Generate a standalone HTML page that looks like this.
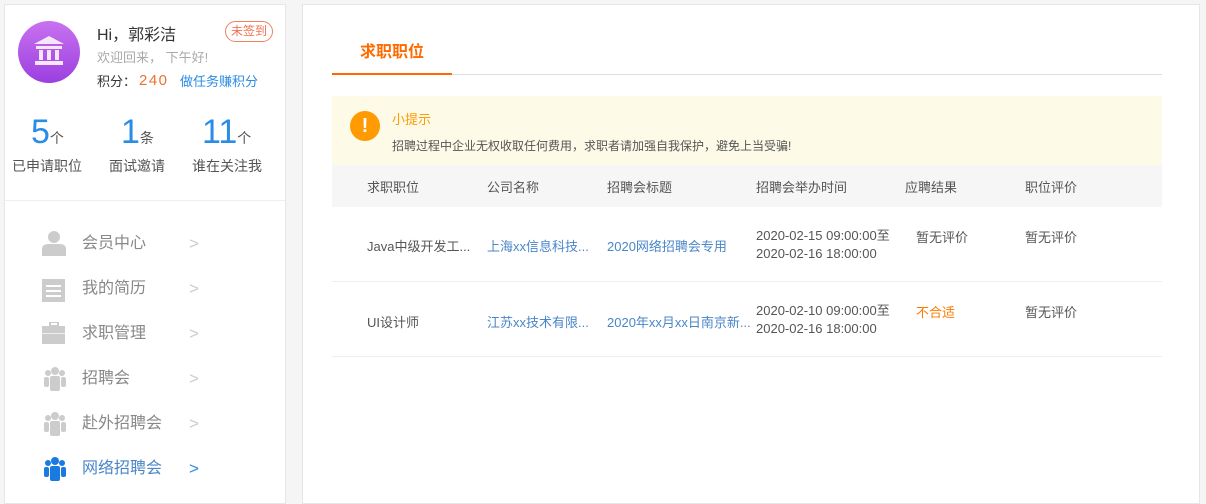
<!DOCTYPE html>
<html><head><meta charset="utf-8"><style>
*{margin:0;padding:0;box-sizing:border-box}
body{width:1206px;height:500px;background:#f5f5f5;font-family:"Liberation Sans","Noto Sans CJK SC",sans-serif;position:relative;overflow:hidden;color:#333}
.a{position:absolute;white-space:nowrap}
.lp{position:absolute;left:4px;top:4px;width:282px;height:500px;background:#fff;border:1px solid #e6e6e6}
.rp{position:absolute;left:302px;top:4px;width:898px;height:500px;background:#fff;border:1px solid #e6e6e6}
.num{font-size:34px;color:#2a8ce5;line-height:34px}
.num small{font-size:14px;color:#555}
.lbl{font-size:14px;color:#555}
.mi{font-size:16px;color:#888}
.ar{font-size:17px;color:#ccc}
.th{font-size:13px;color:#555}
.td{font-size:13px;color:#555}
.bl{color:#4a86c8}
</style></head><body>
<div class="lp"></div>
<div class="rp"></div>
<div class="a" style="left:18px;top:21px;width:62px;height:62px;border-radius:50%;background:linear-gradient(#c872f0,#9b3fe0)"></div>
<svg class="a" style="left:31px;top:34px" width="36" height="34" viewBox="0 0 36 34"><path d="M18 2 L33 10 L3 10 Z" fill="#f4e6fb"/><rect x="5" y="12" width="26" height="3" fill="#f4e6fb"/><rect x="8" y="16" width="4" height="10" fill="#f4e6fb"/><rect x="16" y="16" width="4" height="10" fill="#f4e6fb"/><rect x="24" y="16" width="4" height="10" fill="#f4e6fb"/><rect x="4" y="27" width="28" height="4" fill="#f4e6fb"/></svg>
<div class="a" style="left:97px;top:21px;font-size:16px;color:#333">Hi，郭彩洁</div>
<div class="a" style="left:225px;top:21px;width:48px;height:21px;border:1px solid #f08060;border-radius:11px;color:#f07050;font-size:12px;line-height:19px;text-align:center">未签到</div>
<div class="a" style="left:97px;top:47px;font-size:13px;color:#aaa">欢迎回来， 下午好!</div>
<div class="a" style="left:97px;top:71px;font-size:13px;color:#333">积分：</div>
<div class="a" style="left:139px;top:72px;color:#f07030;font-size:15px;letter-spacing:1.5px">240</div>
<div class="a" style="left:180px;top:71px;font-size:13px;color:#2a8ce5">做任务赚积分</div>
<div class="a num" style="left:31px;top:115px">5<small>个</small></div>
<div class="a num" style="left:121px;top:115px">1<small>条</small></div>
<div class="a num" style="left:202px;top:115px">11<small>个</small></div>
<div class="a lbl" style="left:12px;top:156px">已申请职位</div>
<div class="a lbl" style="left:109px;top:156px">面试邀请</div>
<div class="a lbl" style="left:192px;top:156px">谁在关注我</div>
<div class="a" style="left:5px;top:200px;width:280px;height:1px;background:#eee"></div>
<svg class="a" style="left:42px;top:230px" width="24" height="26"><circle cx="12" cy="7" r="6" fill="#ccc"/><path d="M0 26 L0 19 Q0 14 7 14 L17 14 Q24 14 24 19 L24 26Z" fill="#ccc"/></svg>
<svg class="a" style="left:42px;top:276px" width="24" height="26"><rect x="0" y="3" width="23" height="23" fill="#ccc"/><rect x="4" y="9" width="15" height="2" fill="#fff"/><rect x="4" y="14" width="15" height="2" fill="#fff"/><rect x="4" y="19" width="15" height="2" fill="#fff"/></svg>
<svg class="a" style="left:42px;top:322px" width="24" height="22"><rect x="0" y="4" width="23" height="18" fill="#ccc"/><rect x="8" y="0" width="8" height="4" fill="none" stroke="#ccc" stroke-width="2"/><rect x="0" y="11" width="23" height="1" fill="#eee"/></svg>
<svg class="a" style="left:44px;top:367px" width="22" height="24"><circle cx="11" cy="4" r="4" fill="#ccc"/><circle cx="4" cy="6" r="3" fill="#ccc"/><circle cx="18" cy="6" r="3" fill="#ccc"/><rect x="6" y="9" width="10" height="15" rx="2" fill="#ccc"/><rect x="0" y="10" width="5" height="10" rx="2" fill="#ccc"/><rect x="17" y="10" width="5" height="10" rx="2" fill="#ccc"/></svg>
<svg class="a" style="left:44px;top:412px" width="22" height="24"><circle cx="11" cy="4" r="4" fill="#ccc"/><circle cx="4" cy="6" r="3" fill="#ccc"/><circle cx="18" cy="6" r="3" fill="#ccc"/><rect x="6" y="9" width="10" height="15" rx="2" fill="#ccc"/><rect x="0" y="10" width="5" height="10" rx="2" fill="#ccc"/><rect x="17" y="10" width="5" height="10" rx="2" fill="#ccc"/></svg>
<svg class="a" style="left:44px;top:457px" width="22" height="24"><circle cx="11" cy="4" r="4" fill="#1a7ae0"/><circle cx="4" cy="6" r="3" fill="#1a7ae0"/><circle cx="18" cy="6" r="3" fill="#1a7ae0"/><rect x="6" y="9" width="10" height="15" rx="2" fill="#1a7ae0"/><rect x="0" y="10" width="5" height="10" rx="2" fill="#1a7ae0"/><rect x="17" y="10" width="5" height="10" rx="2" fill="#1a7ae0"/></svg>
<div class="a mi" style="left:82px;top:229px">会员中心</div><div class="a ar" style="left:189px;top:234px">&gt;</div>
<div class="a mi" style="left:82px;top:274px">我的简历</div><div class="a ar" style="left:189px;top:279px">&gt;</div>
<div class="a mi" style="left:82px;top:319px">求职管理</div><div class="a ar" style="left:189px;top:324px">&gt;</div>
<div class="a mi" style="left:82px;top:364px">招聘会</div><div class="a ar" style="left:189px;top:369px">&gt;</div>
<div class="a mi" style="left:82px;top:409px">赴外招聘会</div><div class="a ar" style="left:189px;top:414px">&gt;</div>
<div class="a mi" style="left:82px;top:454px;color:#4a86c8">网络招聘会</div><div class="a ar" style="left:189px;top:459px;color:#2a8ce5">&gt;</div>

<div class="a" style="left:360px;top:38px;font-size:16px;font-weight:bold;color:#ff6a00">求职职位</div>
<div class="a" style="left:332px;top:74px;width:830px;height:1px;background:#ddd"></div>
<div class="a" style="left:332px;top:73px;width:120px;height:2px;background:#ff6a00"></div>
<div class="a" style="left:332px;top:96px;width:830px;height:69px;background:#fefae8"></div>
<div class="a" style="left:350px;top:111px;width:30px;height:30px;border-radius:50%;background:#ff9a00;color:#fff;font-weight:bold;font-size:20px;line-height:30px;text-align:center">!</div>
<div class="a" style="left:392px;top:109px;font-size:13px;color:#ff9a00">小提示</div>
<div class="a" style="left:392px;top:137px;font-size:12px;color:#555">招聘过程中企业无权收取任何费用，求职者请加强自我保护，避免上当受骗!</div>
<div class="a" style="left:332px;top:165px;width:830px;height:42px;background:#f6f6f6"></div>
<div class="a th" style="left:367px;top:177px">求职职位</div>
<div class="a th" style="left:487px;top:177px">公司名称</div>
<div class="a th" style="left:607px;top:177px">招聘会标题</div>
<div class="a th" style="left:756px;top:177px">招聘会举办时间</div>
<div class="a th" style="left:905px;top:177px">应聘结果</div>
<div class="a th" style="left:1025px;top:177px">职位评价</div>
<div class="a" style="left:332px;top:281px;width:830px;height:1px;background:#eee"></div>
<div class="a" style="left:332px;top:356px;width:830px;height:1px;background:#eee"></div>
<div class="a td" style="left:367px;top:236px">Java中级开发工...</div>
<div class="a td bl" style="left:487px;top:236px">上海xx信息科技...</div>
<div class="a td bl" style="left:607px;top:236px">2020网络招聘会专用</div>
<div class="a td" style="left:756px;top:227px;line-height:18px">2020-02-15 09:00:00至<br>2020-02-16 18:00:00</div>
<div class="a td" style="left:916px;top:227px">暂无评价</div>
<div class="a td" style="left:1025px;top:227px">暂无评价</div>
<div class="a td" style="left:367px;top:312px">UI设计师</div>
<div class="a td bl" style="left:487px;top:312px">江苏xx技术有限...</div>
<div class="a td bl" style="left:607px;top:312px">2020年xx月xx日南京新...</div>
<div class="a td" style="left:756px;top:302px;line-height:18px">2020-02-10 09:00:00至<br>2020-02-16 18:00:00</div>
<div class="a td" style="left:916px;top:302px;color:#ff7a00">不合适</div>
<div class="a td" style="left:1025px;top:302px">暂无评价</div>
</body></html>
